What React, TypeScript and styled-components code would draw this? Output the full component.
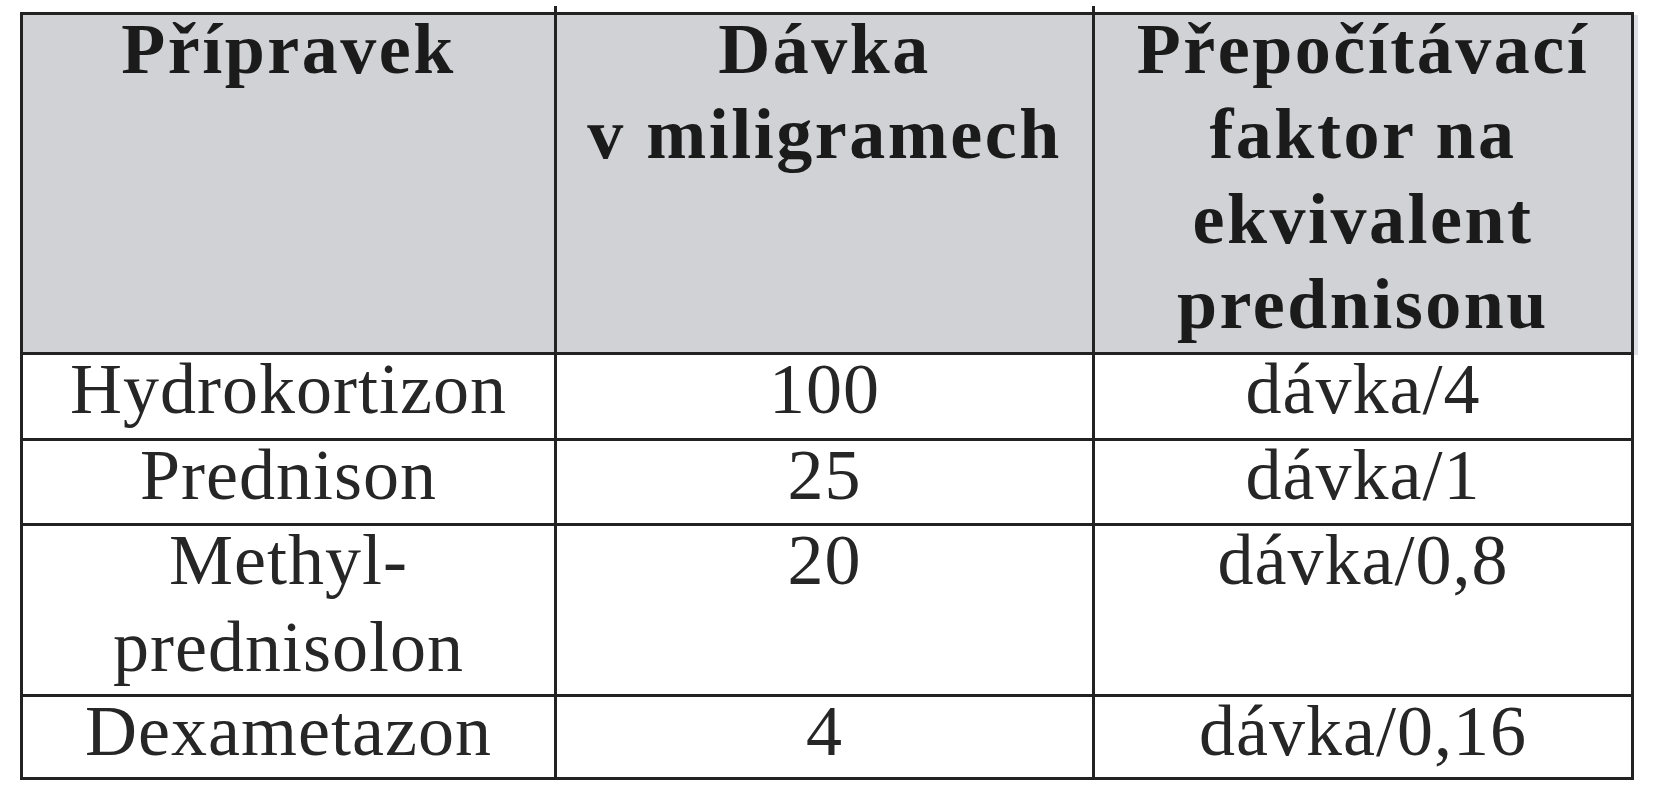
import React from "react";
import styled, { createGlobalStyle } from "styled-components";

const GlobalStyle = createGlobalStyle`
  html, body {
    margin: 0;
    padding: 0;
    background: #ffffff;
  }
  body {
    font-family: "Liberation Serif", "Times New Roman", serif;
    color: #1e1e1e;
  }
`;

const Page = styled.div`
  padding: 12px 0 0 20px;
`;

const Table = styled.div`
  display: grid;
  grid-template-columns: 534px 538px 539px;
  grid-template-rows: 340px 86px 85px 171px 83px;
  width: 1614px;
  box-sizing: border-box;
  border-top: 3px solid #222222;
  border-left: 3px solid #222222;
`;

const Cell = styled.div<{ $head?: boolean; $col: number; $last?: boolean }>`
  position: relative;
  box-sizing: border-box;
  display: flex;
  flex-direction: column;
  align-items: center;
  gap: ${(p) => (p.$head ? "16px" : "18px")};
  border-right: 3px solid #222222;
  border-bottom: 3px solid #222222;
  background: ${(p) => (p.$head ? "#d1d2d6" : "#ffffff")};
  font-family: "Liberation Serif", "Times New Roman", serif;
  font-size: 72px;
  font-weight: ${(p) => (p.$head ? 700 : 400)};
  letter-spacing: ${(p) => (p.$head ? "2.5px" : "1px")};
  color: ${(p) => (p.$head ? "#1b1b1b" : "#262626")};
  ${(p) =>
    p.$head && p.$col === 2
      ? `box-shadow: 4px 0 0 0 #dedfe2;`
      : ""}
  ${(p) =>
    p.$head && p.$col < 2
      ? `&::after {
          content: "";
          position: absolute;
          right: -3px;
          top: -9px;
          width: 3px;
          height: 9px;
          background: #222222;
        }`
      : ""}
  ${(p) =>
    p.$last && p.$col < 2
      ? `&::after {
          content: "";
          position: absolute;
          right: -3px;
          bottom: -8px;
          width: 3px;
          height: 8px;
          background: #222222;
        }`
      : ""}
`;

const Line = styled.span`
  display: block;
  line-height: 69px;
  height: 69px;
  white-space: nowrap;
`;

const header: string[][] = [
  ["Přípravek"],
  ["Dávka", "v miligramech"],
  ["Přepočítávací", "faktor na", "ekvivalent", "prednisonu"],
];

const rows: string[][][] = [
  [["Hydrokortizon"], ["100"], ["dávka/4"]],
  [["Prednison"], ["25"], ["dávka/1"]],
  [["Methyl-", "prednisolon"], ["20"], ["dávka/0,8"]],
  [["Dexametazon"], ["4"], ["dávka/0,16"]],
];

export default function App() {
  return (
    <>
      <GlobalStyle />
      <Page>
        <Table>
          {header.map((lines, c) => (
            <Cell key={`h${c}`} $head $col={c}>
              {lines.map((l) => (
                <Line key={l}>{l}</Line>
              ))}
            </Cell>
          ))}
          {rows.map((row, r) =>
            row.map((lines, c) => (
              <Cell key={`r${r}c${c}`} $col={c} $last={r === rows.length - 1}>
                {lines.map((l) => (
                  <Line key={l}>{l}</Line>
                ))}
              </Cell>
            ))
          )}
        </Table>
      </Page>
    </>
  );
}
